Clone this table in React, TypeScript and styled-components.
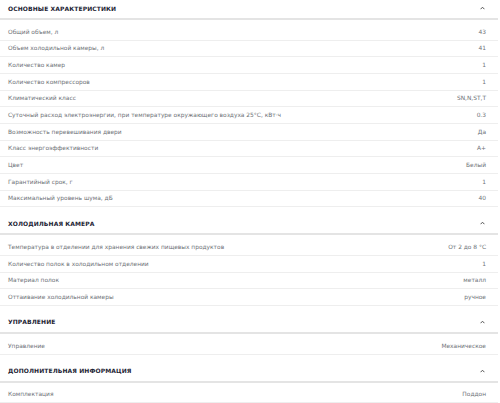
import React from "react";
import styled, { createGlobalStyle } from "styled-components";

const Global = createGlobalStyle`
  html, body { margin: 0; padding: 0; background: #fff; }
  body { font-family: "DejaVu Sans", "Liberation Sans", sans-serif; }
`;

const Page = styled.div`
  width: 498px;
  display: flex;
  flex-direction: column;
`;

const Section = styled.section`
  display: flex;
  flex-direction: column;
  & + & { margin-top: 8px; }
`;

const Header = styled.div`
  box-sizing: border-box;
  height: 20px;
  display: flex;
  align-items: center;
  justify-content: space-between;
  padding: 0 12px 2px 8px;
  border-bottom: 2px solid #e4e4e4;
`;

const Title = styled.h2`
  margin: 0;
  font-size: 6px;
  font-weight: 700;
  color: #1d2434;
  letter-spacing: 0.1px;
`;

const Chevron = styled.svg`
  width: 5px;
  height: 4px;
  margin-right: 1px;
`;

const List = styled.div`
  display: flex;
  flex-direction: column;
  padding-top: 4px;
`;

const Row = styled.div`
  box-sizing: border-box;
  height: 16.66px;
  display: flex;
  align-items: center;
  justify-content: space-between;
  padding: 0 12px 0 8px;
  border-bottom: 1px solid #eeeeee;
  font-size: 5.9px;
  color: #6e7277;
`;

const Label = styled.span``;
const Value = styled.span``;

type Item = [string, string];
const sections: { title: string; items: Item[] }[] = [
  {
    title: "ОСНОВНЫЕ ХАРАКТЕРИСТИКИ",
    items: [
      ["Общий объем, л", "43"],
      ["Объем холодильной камеры, л", "41"],
      ["Количество камер", "1"],
      ["Количество компрессоров", "1"],
      ["Климатический класс", "SN,N,ST,T"],
      ["Суточный расход электроэнергии, при температуре окружающего воздуха 25°C, кВт·ч", "0.3"],
      ["Возможность перевешивания двери", "Да"],
      ["Класс энергоэффективности", "A+"],
      ["Цвет", "Белый"],
      ["Гарантийный срок, г", "1"],
      ["Максимальный уровень шума, дБ", "40"],
    ],
  },
  {
    title: "ХОЛОДИЛЬНАЯ КАМЕРА",
    items: [
      ["Температура в отделении для хранения свежих пищевых продуктов", "От 2 до 8 °C"],
      ["Количество полок в холодильном отделении", "1"],
      ["Материал полок", "металл"],
      ["Оттаивание холодильной камеры", "ручное"],
    ],
  },
  { title: "УПРАВЛЕНИЕ", items: [["Управление", "Механическое"]] },
  { title: "ДОПОЛНИТЕЛЬНАЯ ИНФОРМАЦИЯ", items: [["Комплектация", "Поддон"]] },
];

export default function App() {
  return (
    <>
      <Global />
      <Page>
        {sections.map((s) => (
          <Section key={s.title}>
            <Header>
              <Title>{s.title}</Title>
              <Chevron viewBox="0 0 5 4">
                <path d="M0.6 3.2 L2.5 1.2 L4.4 3.2" fill="none" stroke="#555" strokeWidth="1" />
              </Chevron>
            </Header>
            <List>
              {s.items.map(([l, v]) => (
                <Row key={l}>
                  <Label>{l}</Label>
                  <Value>{v}</Value>
                </Row>
              ))}
            </List>
          </Section>
        ))}
      </Page>
    </>
  );
}
